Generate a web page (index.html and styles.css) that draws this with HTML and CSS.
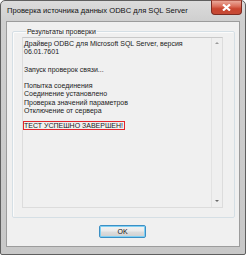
FILE: index.html
```html
<!DOCTYPE html>
<html lang="ru">
<head>
<meta charset="utf-8">
<link rel="stylesheet" href="styles.css">
</head>
<body>
<div class="window">
  <div class="titlebar">
    <div class="title">Проверка источника данных ODBC для SQL Server</div>
    <div class="close" aria-label="Закрыть">
      <svg class="close-x" width="9" height="7" viewBox="0 0 9 7"><path d="M1 0.5 L8 6.5 M8 0.5 L1 6.5" stroke="#ffffff" stroke-width="2.2"/></svg>
    </div>
  </div>
  <div class="client">
    <fieldset class="group">
      <legend>Результаты проверки</legend>
      <div class="textbox">
        <div class="content">
          <div class="line">Драйвер ODBC для Microsoft SQL Server, версия</div>
          <div class="line">06.01.7601</div>
          <div class="line gap1">Запуск проверок связи...</div>
          <div class="line gap2">Попытка соединения</div>
          <div class="line">Соединение установлено</div>
          <div class="line">Проверка значений параметров</div>
          <div class="line">Отключение от сервера</div>
          <div class="line gap3"><span class="mark">ТЕСТ УСПЕШНО ЗАВЕРШЕН!</span></div>
        </div>
        <div class="scrollbar">
          <span class="arrow up"></span>
          <span class="arrow down"></span>
        </div>
      </div>
    </fieldset>
    <div class="buttons">
      <button class="ok">OK</button>
    </div>
  </div>
</div>
</body>
</html>
```

FILE: styles.css
```css
html, body {
  margin: 0;
  padding: 0;
  background: #ffffff;
}
.window {
  position: relative;
  box-sizing: border-box;
  width: 246px;
  height: 255px;
  border: 1px solid #5f5f5f;
  border-radius: 5px 5px 2px 2px;
  background: linear-gradient(#dcdcdc, #cfcfcf 20px, #c8c8c8);
  display: flex;
  flex-direction: column;
  font-family: "Liberation Sans", Arial, sans-serif;
  color: #1b1b1b;
}
.titlebar {
  height: 20px;
  flex-shrink: 0;
  display: flex;
  align-items: flex-start;
}
.title {
  font-size: 7.6px;
  padding: 5px 0 0 6px;
  color: #111;
  white-space: nowrap;
}
.close {
  position: absolute;
  top: -1px;
  right: 3px;
  z-index: 10;
  width: 31px;
  height: 15px;
  box-sizing: border-box;
  border: 1px solid #7e2c22;
  border-top-color: #b35a4c;
  border-radius: 0 0 4px 4px;
  background-color: #cf5542;
  background-image: linear-gradient(to bottom, #eaa899 0%, #dc6f5c 40%, #c9452f 60%, #c64a36 100%);
  display: flex;
  align-items: center;
  justify-content: center;
}
.close-x {
  display: block;
}
.client {
  flex: 1;
  margin: 0 5px 7px 5px;
  background: #f0f0f0;
  border: 1px solid #9c9c9c;
  display: flex;
  flex-direction: column;
}
.group {
  margin: 6px 4px 0 5px;
  padding: 0 11px 9px 9px;
  border: 1px solid #d5dfe5;
  border-radius: 2px;
  box-shadow: inset 1px 1px 0 #fbfbfb;
  height: 190px;
  box-sizing: border-box;
  min-width: 0;
}
.group legend {
  font-size: 7px;
  padding: 0 1px;
  margin-left: 4px;
  color: #1b1b1b;
}
.textbox {
  box-sizing: border-box;
  height: 171px;
  margin-top: 2px;
  border: 1px solid #dcdcdc;
  border-top-color: #c9c9c9;
  background: #f0f0f0;
  display: flex;
}
.content {
  flex: 1;
  padding: 1.5px 0 0 1px;
  font-size: 7px;
  line-height: 8.4px;
  white-space: nowrap;
}
.line {
  height: 8.4px;
}
.gap1 { margin-top: 9.8px; }
.gap2 { margin-top: 7.6px; }
.gap3 { margin-top: 5px; }
.mark {
  display: inline-block;
  box-sizing: border-box;
  border: 1px solid #e2262c;
  height: 9px;
  line-height: 7px;
  padding: 0 1px 0 0;
  margin-left: -1px;
  vertical-align: top;
}
.scrollbar {
  width: 10px;
  border-left: 1px solid #e2e2e2;
  background: #efefef;
  position: relative;
}
.arrow {
  position: absolute;
  left: 3px;
  width: 0;
  height: 0;
  border-left: 2px solid transparent;
  border-right: 2px solid transparent;
}
.arrow.up {
  top: 4px;
  border-bottom: 2px solid #9a9a9a;
}
.arrow.down {
  bottom: 5px;
  border-top: 2px solid #6a6a6a;
}
.buttons {
  display: flex;
  justify-content: center;
  padding-top: 7px;
}
.ok {
  box-sizing: border-box;
  width: 47px;
  height: 13px;
  margin-left: -1px;
  padding: 0;
  border: 1px solid #3c8fc4;
  border-radius: 2px;
  box-shadow: inset 0 0 0 1px #7fd0f4;
  background: linear-gradient(#f2f2f2 0%, #ebebeb 45%, #dddddd 55%, #cfcfcf 100%);
  font-family: "Liberation Sans", Arial, sans-serif;
  font-size: 7px;
  color: #111;
  line-height: 11px;
}
```
